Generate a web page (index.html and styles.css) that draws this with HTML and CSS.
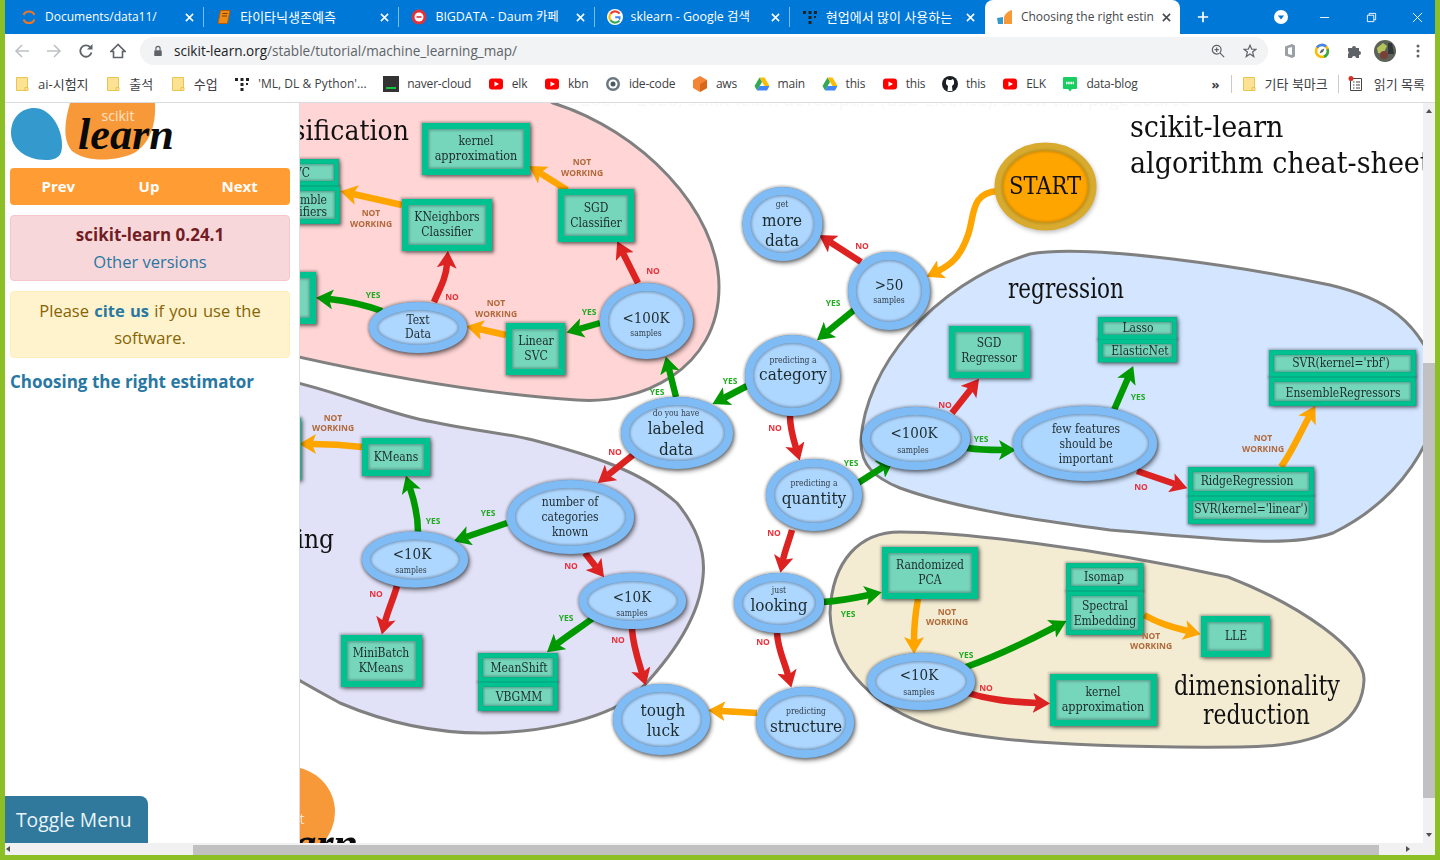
FILE: index.html
```html
<!DOCTYPE html>
<html lang="en">

<head>
    <meta charset="UTF-8">
    <meta name="viewport" content="width=device-width, initial-scale=1.0">
    <title>Choosing the right estimator</title>
    <link rel="stylesheet" href="styles.css">
</head>

<body>

    <!-- shared icons -->
    <svg class="icon-defs" aria-hidden="true">
        <symbol id="i-x" viewBox="0 0 10 10">
            <path d="M1 1L9 9M9 1L1 9" fill="none" stroke="currentColor" stroke-width="1.7" />
        </symbol>
        <symbol id="i-folder" viewBox="0 0 14 16">
            <path d="M1.5 1.5H12.5V14.5H1.5Z" fill="#fde293" stroke="#e8c450" />
            <path d="M10 11.5H13V14.5H10Z" fill="#fde293" stroke="#e8c450" />
        </symbol>
        <symbol id="i-yt" viewBox="0 0 16 16">
            <rect x="1" y="2.5" width="14" height="11" rx="3" fill="#f00" />
            <path d="M6.5 5.5L11 8L6.5 10.5Z" fill="#fff" />
        </symbol>
        <symbol id="i-dots" viewBox="0 0 16 16">
            <g fill="#222">
                <rect x="1" y="2" width="3" height="3" />
                <rect x="6.5" y="2" width="3" height="3" />
                <rect x="12" y="2" width="3" height="3" />
                <rect x="6.5" y="7" width="3" height="3" />
                <rect x="12" y="7" width="2" height="2" />
                <rect x="6.5" y="12" width="3" height="3" />
            </g>
        </symbol>
        <symbol id="i-drive" viewBox="0 0 16 16">
            <path d="M5.5 1.5H10.5L15.5 10H10.5Z" fill="#fbbc04" />
            <path d="M5.5 1.5L.5 10L3 14.5L8 6Z" fill="#34a853" />
            <path d="M3 14.5H13L15.5 10H5.5Z" fill="#4285f4" />
        </symbol>
    </svg>

    <div class="tabbar">
        <div class="tab">
            <svg class="fav" viewBox="0 0 16 16">
                <path d="M2.5 6A6 6 0 0 1 13.5 6" fill="none" stroke="#e8762b" stroke-width="2" />
                <path d="M2.5 10.5A6 6 0 0 0 13.5 10.5" fill="none" stroke="#e8762b" stroke-width="2" />
            </svg>
            <span class="tab-title">Documents/data11/</span>
            <svg class="tab-x"><use href="#i-x" /></svg>
        </div>
        <div class="tab">
            <svg class="fav" viewBox="0 0 16 16">
                <path d="M4.5 1.5H14L11.5 14.5H2Z" fill="#ef8a17" stroke="#b35c00" />
                <path d="M6.5 4.5H11.5M6 7H11" stroke="#7a3e00" />
            </svg>
            <span class="tab-title ko">타이타닉생존예측</span>
            <svg class="tab-x"><use href="#i-x" /></svg>
        </div>
        <div class="tab">
            <svg class="fav" viewBox="0 0 16 16">
                <circle cx="8" cy="8" r="7.5" fill="#e0323c" />
                <circle cx="8" cy="8" r="4.5" fill="#fff" />
                <path d="M5.5 8H10.5" stroke="#e0323c" stroke-width="1.6" />
            </svg>
            <span class="tab-title mixed">BIGDATA - Daum 카페</span>
            <svg class="tab-x"><use href="#i-x" /></svg>
        </div>
        <div class="tab">
            <svg class="fav" viewBox="0 0 16 16">
                <circle cx="8" cy="8" r="8" fill="#fff" />
                <path d="M12.6 4.6A5.6 5.6 0 0 0 3.5 4.8" fill="none" stroke="#ea4335" stroke-width="2.2" />
                <path d="M3.5 4.8A5.6 5.6 0 0 0 3.5 11.2" fill="none" stroke="#fbbc05" stroke-width="2.2" />
                <path d="M3.5 11.2A5.6 5.6 0 0 0 12.4 11.6" fill="none" stroke="#34a853" stroke-width="2.2" />
                <path d="M12.4 11.6A5.6 5.6 0 0 0 13.6 7.2H8.2V9.2H11.5" fill="#4285f4" />
            </svg>
            <span class="tab-title mixed">sklearn - Google 검색</span>
            <svg class="tab-x"><use href="#i-x" /></svg>
        </div>
        <div class="tab">
            <svg class="fav"><use href="#i-dots" /></svg>
            <span class="tab-title ko">현업에서 많이 사용하는</span>
            <svg class="tab-x"><use href="#i-x" /></svg>
        </div>
        <div class="tab tab-active">
            <svg class="fav" viewBox="0 0 16 16">
                <path d="M0 9L6 8V15H1Z" fill="#3499cd" />
                <path d="M7 8C8 5 11 2 15 1V15H7Z" fill="#f89939" />
            </svg>
            <span class="tab-title">Choosing the right estin</span>
            <svg class="tab-x"><use href="#i-x" /></svg>
        </div>
        <svg class="new-tab" viewBox="0 0 14 14">
            <path d="M7 1V13M1 7H13" stroke="#fff" stroke-width="2" />
        </svg>
        <svg class="tab-search" viewBox="0 0 14 14">
            <circle cx="7" cy="7" r="7" fill="#fff" />
            <path d="M4 5.5H10L7 9.5Z" fill="#0078d7" />
        </svg>
        <div class="win-btns">
            <svg viewBox="0 0 12 12"><path d="M1 6H11" stroke="#fff" /></svg>
            <svg viewBox="0 0 12 12">
                <path d="M1.5 3.5H8.5V10.5H1.5ZM3.5 3.5V1.5H10.5V8.5H8.5" fill="none" stroke="#fff" />
            </svg>
            <svg viewBox="0 0 12 12"><path d="M1 1L11 11M11 1L1 11" stroke="#fff" /></svg>
        </div>
    </div>

    <div class="toolbar">
        <svg class="tool tool-off" viewBox="0 0 16 16">
            <path d="M15 8H2M8 2L2 8L8 14" fill="none" stroke="currentColor" stroke-width="1.6" />
        </svg>
        <svg class="tool tool-off" viewBox="0 0 16 16">
            <path d="M1 8H14M8 2L14 8L8 14" fill="none" stroke="currentColor" stroke-width="1.6" />
        </svg>
        <svg class="tool" viewBox="0 0 16 16">
            <path d="M13.5 9.5A5.7 5.7 0 1 1 12 4" fill="none" stroke="currentColor" stroke-width="1.8" />
            <path d="M14.5 1V6.5H9Z" fill="currentColor" />
        </svg>
        <svg class="tool" viewBox="0 0 16 16">
            <path d="M8 1.5L1 8.5H3.5V14.5H12.5V8.5H15Z" fill="none" stroke="currentColor" stroke-width="1.6" />
        </svg>
        <div class="omnibox">
            <svg class="lock" viewBox="0 0 12 14">
                <path d="M3.5 6V4A2.5 2.5 0 0 1 8.5 4V6" fill="none" stroke="#5f6368" stroke-width="1.4" />
                <rect x="1.5" y="6" width="9" height="7" rx="1" fill="#5f6368" />
            </svg>
            <span class="url">scikit-learn.org<span class="url-path">/stable/tutorial/machine_learning_map/</span></span>
            <svg class="omni-icon" viewBox="0 0 16 16">
                <circle cx="6.5" cy="6.5" r="5" fill="none" stroke="#5f6368" stroke-width="1.4" />
                <path d="M10.5 10.5L15 15M4 6.5H9M6.5 4V9" stroke="#5f6368" stroke-width="1.4" />
            </svg>
            <svg class="omni-icon omni-star" viewBox="0 0 16 16">
                <path d="M8 1.5L10 6H14.8L11 9.2L12.3 14.3L8 11.5L3.7 14.3L5 9.2L1.2 6H6Z" fill="none" stroke="#5f6368" stroke-width="1.4" />
            </svg>
        </div>
        <svg class="ext ext-first" viewBox="0 0 16 16">
            <path d="M3 3.5L10 1L13 2.5V13.5L10 15L3 12.5Z" fill="#9aa0a6" />
            <path d="M6 5L10 4V12L6 11Z" fill="#fff" />
        </svg>
        <svg class="ext" viewBox="0 0 16 16">
            <circle cx="8" cy="8" r="6" fill="#fff" stroke="#fbbc04" stroke-width="2.6" />
            <path d="M3 4.5A6 6 0 0 1 12 3.5" fill="none" stroke="#4285f4" stroke-width="2.6" />
            <path d="M13.5 6A6 6 0 0 1 10 13.8" fill="none" stroke="#34a853" stroke-width="2.6" />
            <path d="M10.5 5.5L7 7L5.5 10.5L9 9Z" fill="#5f6368" />
        </svg>
        <svg class="ext" viewBox="0 0 16 16">
            <path d="M2 5H6A2 2 0 0 1 10 5H13V8A2 2 0 0 1 13 12V15H10A2 2 0 0 0 6 15H2V11A2 2 0 0 0 2 8Z" fill="#5f6368" />
        </svg>
        <svg class="avatar" viewBox="0 0 22 22">
            <circle cx="11" cy="11" r="11" fill="#5c6258" />
            <path d="M3 8L9 3L13 6L9 14L4 13Z" fill="#b5c45a" />
            <path d="M14 3H18L20 14H14Z" fill="#30363a" />
            <circle cx="10" cy="15" r="4" fill="#7a4038" />
        </svg>
        <svg class="kebab" viewBox="0 0 4 16">
            <circle cx="2" cy="3" r="1.5" fill="#5f6368" />
            <circle cx="2" cy="8" r="1.5" fill="#5f6368" />
            <circle cx="2" cy="13" r="1.5" fill="#5f6368" />
        </svg>
    </div>

    <div class="bookmarks">
        <span class="bm ko"><svg class="bm-icon"><use href="#i-folder" /></svg>ai-시험지</span>
        <span class="bm ko"><svg class="bm-icon"><use href="#i-folder" /></svg>출석</span>
        <span class="bm ko"><svg class="bm-icon"><use href="#i-folder" /></svg>수업</span>
        <span class="bm bm-wide"><svg class="bm-icon"><use href="#i-dots" /></svg>'ML, DL &amp; Python'...</span>
        <span class="bm">
            <svg class="bm-icon" viewBox="0 0 16 16">
                <rect x="0" y="0" width="16" height="16" fill="#333" />
                <rect x="3" y="11" width="10" height="2" fill="#13c540" />
            </svg>naver-cloud</span>
        <span class="bm"><svg class="bm-icon"><use href="#i-yt" /></svg>elk</span>
        <span class="bm"><svg class="bm-icon"><use href="#i-yt" /></svg>kbn</span>
        <span class="bm">
            <svg class="bm-icon" viewBox="0 0 16 16">
                <circle cx="8" cy="8" r="7" fill="#6b7780" />
                <circle cx="8" cy="8" r="4.5" fill="#fff" />
                <circle cx="8" cy="8" r="2.5" fill="#4c5860" />
            </svg>ide-code</span>
        <span class="bm">
            <svg class="bm-icon" viewBox="0 0 16 16">
                <path d="M8 0L15 4V12L8 16L1 12V4Z" fill="#f58536" />
                <path d="M8 8L15 4V12L8 16Z" fill="#d9671b" />
            </svg>aws</span>
        <span class="bm"><svg class="bm-icon"><use href="#i-drive" /></svg>main</span>
        <span class="bm"><svg class="bm-icon"><use href="#i-drive" /></svg>this</span>
        <span class="bm"><svg class="bm-icon"><use href="#i-yt" /></svg>this</span>
        <span class="bm">
            <svg class="bm-icon" viewBox="0 0 16 16">
                <circle cx="8" cy="8" r="8" fill="#1b1f23" />
                <path d="M4 5L5 3L7 4H9L11 3L12 5V8L10 10L10.5 15H5.5L6 10L4 8Z" fill="#fff" />
            </svg>this</span>
        <span class="bm"><svg class="bm-icon"><use href="#i-yt" /></svg>ELK</span>
        <span class="bm">
            <svg class="bm-icon" viewBox="0 0 16 16">
                <path d="M2 1H14A1 1 0 0 1 15 2V12A1 1 0 0 1 14 13H10L8 15.5L6 13H2A1 1 0 0 1 1 12V2A1 1 0 0 1 2 1Z" fill="#19ce60" />
                <path d="M4 7H12" stroke="#fff" stroke-width="2.5" stroke-dasharray="1.5 .7" />
            </svg>data-blog</span>
        <span class="bm-more">»</span>
        <span class="bm-sep"></span>
        <span class="bm ko bm-right"><svg class="bm-icon"><use href="#i-folder" /></svg>기타 북마크</span>
        <span class="bm-sep"></span>
        <span class="bm ko bm-last">
            <svg class="bm-icon" viewBox="0 0 16 16">
                <path d="M2.5 2.5H13.5V14.5H2.5Z" fill="none" stroke="#444" />
                <path d="M5 6H6.5M8 6H12M5 9H6.5M8 9H12M5 12H6.5M8 12H12" stroke="#444" />
                <circle cx="3" cy="2.5" r="2.5" fill="#d93025" />
            </svg>읽기 목록</span>
    </div>

    <div class="viewport">
        <div class="page">
            <div class="sidebar">
                <svg class="logo" viewBox="0 0 170 57">
                    <path d="M1 30C1 14 12 5 24 5C40 5 52 24 52 42C52 50 50 57 36 57C14 57 1 44 1 30Z" class="logo-blue" />
                    <path d="M60 0H145C146 20 141 40 124 50C108 58 76 60 62 48C53 38 54 20 60 0Z" class="logo-orange" />
                    <text x="108" y="18" class="logo-scikit">scikit</text>
                    <text x="68" y="46" class="logo-learn" textLength="96" lengthAdjust="spacingAndGlyphs">learn</text>
                </svg>
                <div class="nav-btns">
                    <a>Prev</a>
                    <a>Up</a>
                    <a>Next</a>
                </div>
                <div class="box box-version">
                    <strong>scikit-learn 0.24.1</strong>
                    <a>Other versions</a>
                </div>
                <div class="box box-cite">
                    Please <b>cite us</b> if you use the software.
                </div>
                <div class="toc-link">Choosing the right estimator</div>
                <div class="toggle-menu">Toggle Menu</div>
            </div>

            <div class="content">
                <svg class="map" viewBox="300 103 1123 740">
                    <defs>
                        <marker id="head-red" markerUnits="userSpaceOnUse" markerWidth="18" markerHeight="20" refX="4" refY="10" orient="auto">
                            <path d="M0 0L17 10L0 20L4 10Z" class="fill-red" />
                        </marker>
                        <marker id="head-green" markerUnits="userSpaceOnUse" markerWidth="18" markerHeight="20" refX="4" refY="10" orient="auto">
                            <path d="M0 0L17 10L0 20L4 10Z" class="fill-green" />
                        </marker>
                        <marker id="head-orange" markerUnits="userSpaceOnUse" markerWidth="18" markerHeight="20" refX="4" refY="10" orient="auto">
                            <path d="M0 0L17 10L0 20L4 10Z" class="fill-orange" />
                        </marker>

                        <g id="box-shapes">
                            <rect x="425" y="126" width="102" height="46" />
                            <rect x="405" y="202" width="84" height="46" />
                            <rect x="561" y="192" width="70" height="47" />
                            <rect x="509" y="326" width="53" height="46" />
                            <rect x="290" y="275" width="23" height="46" />
                            <rect x="365" y="441" width="62" height="32" />
                            <rect x="285" y="421" width="13" height="56" />
                            <rect x="344" y="638" width="75" height="46" />
                            <rect x="952" y="329" width="75" height="46" />
                            <rect x="885" y="550" width="90" height="46" />
                            <rect x="1204" y="619" width="63" height="35" />
                            <rect x="1053" y="677" width="101" height="46" />
                        </g>
                        <g id="stack-shapes">
                            <rect x="290" y="161.5" width="46.5" height="22" />
                            <rect x="290" y="188.5" width="47.5" height="33" />
                            <rect x="480.5" y="655.5" width="75" height="24" />
                            <rect x="480.5" y="684.5" width="75" height="24" />
                            <rect x="1100.5" y="319.5" width="74" height="17.5" />
                            <rect x="1100.5" y="341.5" width="74" height="18.5" />
                            <rect x="1271.5" y="352.5" width="142" height="22" />
                            <rect x="1271.5" y="379.5" width="142" height="24" />
                            <rect x="1190.5" y="469.5" width="121" height="24" />
                            <rect x="1190.5" y="498.5" width="121" height="23" />
                            <rect x="1068.5" y="565.5" width="72.5" height="23" />
                            <rect x="1068.5" y="593.5" width="72.5" height="39" />
                        </g>
                        <g id="oval-shapes">
                            <ellipse cx="782.5" cy="224" rx="36" ry="33" />
                            <ellipse cx="889" cy="291" rx="37" ry="35" />
                            <ellipse cx="792.5" cy="375.5" rx="43.5" ry="36.5" />
                            <ellipse cx="916" cy="438.5" rx="50" ry="27.5" />
                            <ellipse cx="814" cy="495" rx="44" ry="32" />
                            <ellipse cx="1085" cy="443.5" rx="68" ry="33.5" />
                            <ellipse cx="677" cy="433" rx="52" ry="32" />
                            <ellipse cx="646.5" cy="321" rx="42.5" ry="34" />
                            <ellipse cx="418" cy="327.5" rx="45" ry="21.5" />
                            <ellipse cx="570.5" cy="517" rx="59.5" ry="33" />
                            <ellipse cx="415" cy="559.5" rx="49" ry="24" />
                            <ellipse cx="632.5" cy="601" rx="49.5" ry="24" />
                            <ellipse cx="661.5" cy="719.5" rx="44.5" ry="31.5" />
                            <ellipse cx="779" cy="603" rx="41" ry="26" />
                            <ellipse cx="805" cy="722.5" rx="45" ry="31.5" />
                            <ellipse cx="921" cy="681.5" rx="50" ry="24.5" />
                        </g>
                    </defs>

                    <text x="1190" y="106" class="faint">© 2007 - 2020, scikit-learn developers (BSD License). Show this page source</text>

                    <!-- regions -->
                    <path class="region region-class" d="M290 355C400 380 500 395 577 400C640 405 719 370 719 287C719 210 640 130 553 103L540 95H290Z" />
                    <path class="region region-clust" d="M290 381C350 395 390 415 433 422C480 432 500 432 533 440C590 455 640 470 677 503C695 525 706 550 703 577C700 610 680 650 633 697C600 720 540 733 483 733C430 733 380 720 340 703C325 695 312 688 290 675Z" />
                    <path class="region region-reg" d="M861 440C865 370 930 285 1030 254C1090 243 1250 268 1330 285C1385 298 1420 320 1440 380C1440 440 1400 500 1333 533C1290 548 1230 540 1110 530C1050 522 960 510 900 488C875 478 860 465 861 440Z" />
                    <path class="region region-dim" d="M830 613C832 560 860 532 900 532C960 532 1090 547 1228 577C1300 605 1365 650 1364 680C1362 730 1310 747 1240 747C1120 748 1000 745 934 727C880 710 832 670 830 613Z" />

                    <!-- region titles -->
                    <text x="409" y="140" class="heading h-end">classification</text>
                    <text x="334" y="548" class="heading h-end h-narrow">clustering</text>
                    <text x="1008" y="298" class="heading h-tall" textLength="116" lengthAdjust="spacingAndGlyphs">regression</text>
                    <text x="1174" y="695" class="heading h-tall" textLength="166" lengthAdjust="spacingAndGlyphs">dimensionality</text>
                    <text x="1203" y="724" class="heading h-tall" textLength="107" lengthAdjust="spacingAndGlyphs">reduction</text>
                    <text x="1130" y="137" class="heading h-title">scikit-learn</text>
                    <text x="1130" y="173" class="heading h-title">algorithm cheat-sheet</text>

                    <!-- stray logo from the footer -->
                    <circle cx="290" cy="812" r="45" class="logo-orange" />
                    <text x="302" y="824" class="logo-scikit">t</text>
                    <text x="358" y="858" class="logo-learn logo-learn-end">learn</text>

                    <!-- arrows -->
                    <g class="arrows">
                        <path class="a-orange" d="M998 191C970 193 975 215 968 235C960 258 950 265 938 271" />
                        <path class="a-orange" d="M567 190L540 173" />
                        <path class="a-orange" d="M402 205L353 194" />
                        <path class="a-orange" d="M506 335L479 329" />
                        <path class="a-orange" d="M362 447C345 445 330 444 312 444" />
                        <path class="a-orange" d="M757 713L721 711" />
                        <path class="a-orange" d="M918 599C915 615 914 628 914 641" />
                        <path class="a-orange" d="M1144 615C1160 624 1172 627 1188 631" />
                        <path class="a-orange" d="M1281 467C1292 452 1300 433 1309 417" />

                        <path class="a-red" d="M861 262L830 242" />
                        <path class="a-red" d="M790 416C790 428 793 438 796 448" />
                        <path class="a-red" d="M638 283L623 253" />
                        <path class="a-red" d="M434 302C440 288 446 278 447 264" />
                        <path class="a-red" d="M633 455L608 475" />
                        <path class="a-red" d="M585 553L596 567" />
                        <path class="a-red" d="M397 586C393 600 388 610 385 622" />
                        <path class="a-red" d="M632 629C633 645 638 660 642 673" />
                        <path class="a-red" d="M792 530C789 541 785 550 783 560" />
                        <path class="a-red" d="M777 633C778 650 784 660 788 675" />
                        <path class="a-red" d="M1137 471L1175 484" />
                        <path class="a-red" d="M952 413L971 389" />
                        <path class="a-red" d="M968 693C990 700 1010 702 1037 703" />

                        <path class="a-green" d="M854 310L827 332" />
                        <path class="a-green" d="M747 386L724 398" />
                        <path class="a-green" d="M676 397L669 369" />
                        <path class="a-green" d="M600 323L579 329" />
                        <path class="a-green" d="M382 311C365 305 348 301 329 299" />
                        <path class="a-green" d="M507 523L466 537" />
                        <path class="a-green" d="M418 532C418 515 414 500 410 488" />
                        <path class="a-green" d="M593 618C580 628 568 635 557 644" />
                        <path class="a-green" d="M858 483L883 467" />
                        <path class="a-green" d="M967 448C980 450 990 450 1003 450" />
                        <path class="a-green" d="M1114 410L1128 378" />
                        <path class="a-green" d="M823 602C840 601 855 598 869 595" />
                        <path class="a-green" d="M966 667C1000 655 1030 640 1055 627" />
                    </g>

                    <!-- algorithm boxes: base, inner shade, border on top -->
                    <use href="#box-shapes" class="box-base" />
                    <use href="#box-shapes" class="box-shade" />
                    <use href="#box-shapes" class="box-edge" />
                    <use href="#stack-shapes" class="stack-base" />
                    <use href="#stack-shapes" class="stack-shade" />
                    <use href="#stack-shapes" class="stack-edge" />

                    <!-- decision nodes -->
                    <use href="#oval-shapes" class="oval-base" />
                    <use href="#oval-shapes" class="oval-shade" />
                    <use href="#oval-shapes" class="oval-edge" />
                    <ellipse class="oval-start" cx="1045.5" cy="186.5" rx="47" ry="40" />
                    <ellipse class="start-shade" cx="1045.5" cy="186.5" rx="43" ry="36" />

                    <!-- node text -->
                    <g class="labels" transform="translate(0 0.3)">
                        <text x="476" y="145">kernel</text>
                        <text x="476" y="160" class="l-wide">approximation</text>
                        <text x="310" y="177" class="l-end">SVC</text>
                        <text x="327" y="204" class="l-end">Ensemble</text>
                        <text x="327" y="216" class="l-end">Classifiers</text>
                        <text x="447" y="221">KNeighbors</text>
                        <text x="447" y="236">Classifier</text>
                        <text x="596" y="212">SGD</text>
                        <text x="596" y="227">Classifier</text>
                        <text x="536" y="345">Linear</text>
                        <text x="536" y="360">SVC</text>
                        <text x="418" y="324">Text</text>
                        <text x="418" y="338">Data</text>
                        <text x="396" y="461">KMeans</text>
                        <text x="381" y="657">MiniBatch</text>
                        <text x="381" y="672">KMeans</text>
                        <text x="519" y="672">MeanShift</text>
                        <text x="519" y="701">VBGMM</text>
                        <text x="570" y="506">number of</text>
                        <text x="570" y="521">categories</text>
                        <text x="570" y="536">known</text>
                        <text x="1086" y="433">few features</text>
                        <text x="1086" y="448">should be</text>
                        <text x="1086" y="463">important</text>
                        <text x="989" y="347">SGD</text>
                        <text x="989" y="362">Regressor</text>
                        <text x="1138" y="332">Lasso</text>
                        <text x="1140" y="355">ElasticNet</text>
                        <text x="1341" y="367">SVR(kernel='rbf')</text>
                        <text x="1343" y="397">EnsembleRegressors</text>
                        <text x="1247" y="485">RidgeRegression</text>
                        <text x="1251" y="513">SVR(kernel='linear')</text>
                        <text x="930" y="569">Randomized</text>
                        <text x="930" y="584">PCA</text>
                        <text x="1104" y="581">Isomap</text>
                        <text x="1105" y="610">Spectral</text>
                        <text x="1105" y="625">Embedding</text>
                        <text x="1236" y="640">LLE</text>
                        <text x="1103" y="696">kernel</text>
                        <text x="1103" y="711" class="l-wide">approximation</text>

                        <text x="646" y="322.5" class="l-num">&lt;100K</text>
                        <text x="646" y="336" class="l-small">samples</text>
                        <text x="676" y="415.5" class="l-small">do you have</text>
                        <text x="676" y="434" class="l-big">labeled</text>
                        <text x="676" y="454.5" class="l-big">data</text>
                        <text x="412" y="559" class="l-num">&lt;10K</text>
                        <text x="411" y="573" class="l-small">samples</text>
                        <text x="632" y="602" class="l-num">&lt;10K</text>
                        <text x="632" y="616" class="l-small">samples</text>
                        <text x="663" y="716" class="l-big">tough</text>
                        <text x="663" y="736" class="l-big">luck</text>
                        <text x="779" y="593" class="l-small">just</text>
                        <text x="779" y="611" class="l-big">looking</text>
                        <text x="806" y="714" class="l-small">predicting</text>
                        <text x="806" y="732" class="l-big">structure</text>
                        <text x="782" y="206.5" class="l-small">get</text>
                        <text x="782" y="226" class="l-big">more</text>
                        <text x="782" y="246" class="l-big">data</text>
                        <text x="889" y="290" class="l-num">&gt;50</text>
                        <text x="889" y="303" class="l-small">samples</text>
                        <text x="793" y="362.5" class="l-small">predicting a</text>
                        <text x="793" y="380" class="l-big">category</text>
                        <text x="814" y="485.5" class="l-small">predicting a</text>
                        <text x="814" y="504" class="l-big">quantity</text>
                        <text x="914" y="438" class="l-num">&lt;100K</text>
                        <text x="913" y="453" class="l-small">samples</text>
                        <text x="919" y="680" class="l-num">&lt;10K</text>
                        <text x="919" y="695" class="l-small">samples</text>
                        <text x="1045" y="193.5" class="l-start">START</text>
                    </g>

                    <!-- edge tags -->
                    <g class="tags tag-no">
                        <text x="862" y="249">NO</text>
                        <text x="653" y="274">NO</text>
                        <text x="452" y="300">NO</text>
                        <text x="775" y="431">NO</text>
                        <text x="945" y="408">NO</text>
                        <text x="1141" y="490">NO</text>
                        <text x="615" y="455">NO</text>
                        <text x="571" y="569">NO</text>
                        <text x="376" y="597">NO</text>
                        <text x="618" y="643">NO</text>
                        <text x="774" y="536">NO</text>
                        <text x="763" y="645">NO</text>
                        <text x="986" y="691">NO</text>
                    </g>
                    <g class="tags tag-yes">
                        <text x="833" y="306">YES</text>
                        <text x="730" y="384">YES</text>
                        <text x="657" y="395">YES</text>
                        <text x="589" y="315">YES</text>
                        <text x="373" y="298">YES</text>
                        <text x="488" y="516">YES</text>
                        <text x="433" y="524">YES</text>
                        <text x="566" y="621">YES</text>
                        <text x="851" y="466">YES</text>
                        <text x="981" y="442">YES</text>
                        <text x="1138" y="400">YES</text>
                        <text x="848" y="617">YES</text>
                        <text x="966" y="658">YES</text>
                    </g>
                    <g class="tags tag-not">
                        <text x="582" y="165">NOT</text>
                        <text x="582" y="176">WORKING</text>
                        <text x="371" y="216">NOT</text>
                        <text x="371" y="227">WORKING</text>
                        <text x="496" y="306">NOT</text>
                        <text x="496" y="317">WORKING</text>
                        <text x="333" y="421">NOT</text>
                        <text x="333" y="431">WORKING</text>
                        <text x="1263" y="441">NOT</text>
                        <text x="1263" y="452">WORKING</text>
                        <text x="947" y="615">NOT</text>
                        <text x="947" y="625">WORKING</text>
                        <text x="1151" y="639">NOT</text>
                        <text x="1151" y="649">WORKING</text>
                    </g>
                </svg>
            </div>
        </div>

        <div class="vscroll">
            <span class="tri tri-up"></span>
            <div class="vthumb"></div>
            <span class="tri tri-down"></span>
        </div>
    </div>

    <div class="hscroll">
        <span class="tri tri-left"></span>
        <div class="hthumb"></div>
        <span class="tri tri-right"></span>
    </div>

</body>

</html>
```

FILE: styles.css
```css
html,
body {
    height: 100%;
}

body {
    font-family: "Open Sans", "Noto Sans CJK KR", sans-serif;
    background-color: #8cbf26;
    margin: 0;
    padding: 0 5px 5px;
    box-sizing: border-box;
    display: flex;
    flex-direction: column;
    overflow: hidden;
}

.icon-defs {
    position: absolute;
    width: 0;
    height: 0;
}

/* tab strip */
.tabbar {
    height: 34px;
    flex: none;
    background-color: #0078d7;
    display: flex;
    align-items: center;
    padding-left: 4px;
}

.tab {
    width: 195.2px;
    height: 34px;
    flex: none;
    box-sizing: border-box;
    padding: 0 10px 0 12px;
    display: flex;
    align-items: center;
    color: #fff;
    font-size: 12px;
    position: relative;
}

/* separator between inactive tabs */
.tab::after {
    content: "";
    position: absolute;
    right: 0;
    top: 7px;
    bottom: 7px;
    width: 1px;
    background-color: rgba(255, 255, 255, 0.5);
}

.tab:nth-child(5)::after,
.tab:nth-child(6)::after {
    background-color: transparent;
}

.tab-active {
    background-color: #fff;
    color: #45494d;
    border-radius: 8px 8px 0 0;
}

.fav {
    width: 16px;
    height: 16px;
    flex: none;
    margin-right: 8px;
}

.tab-title {
    flex: 1;
    white-space: nowrap;
    padding-bottom: 2px;
}

.tab-title.ko {
    font-size: 13px;
}

.tab-title.mixed {
    font-size: 12.4px;
}

.tab-x {
    width: 9px;
    height: 9px;
    flex: none;
    margin-left: 8px;
}

.new-tab {
    width: 12px;
    height: 12px;
    margin-left: 17px;
    flex: none;
}

.tab-search {
    width: 14px;
    height: 14px;
    margin-left: 65px;
    flex: none;
}

.win-btns {
    display: flex;
    gap: 35.5px;
    margin-left: 31px;
}

.win-btns svg {
    width: 11px;
    height: 11px;
    display: block;
}

/* toolbar */
.toolbar {
    height: 34px;
    flex: none;
    background-color: #fff;
    display: flex;
    align-items: center;
    padding-left: 9px;
}

.tool {
    width: 16px;
    height: 16px;
    flex: none;
    margin-right: 16px;
    color: #5f6368;
}

.tool-off {
    color: #bdc1c6;
}

.omnibox {
    width: 1128px;
    height: 28px;
    flex: none;
    margin-left: -2px;
    background-color: #f1f3f4;
    border-radius: 14px;
    display: flex;
    align-items: center;
    padding: 0 11px 0 13px;
    box-sizing: border-box;
}

.lock {
    width: 10px;
    height: 12px;
    flex: none;
    margin-right: 11px;
}

.url {
    flex: 1;
    font-size: 13.55px;
    color: #202124;
    white-space: nowrap;
}

.url-path {
    color: #5f6368;
}

.omni-icon {
    width: 14px;
    height: 14px;
    flex: none;
}

.omni-star {
    margin-left: 18px;
}

.ext {
    width: 16px;
    height: 16px;
    flex: none;
    margin-left: 16px;
}

.ext-first {
    margin-left: 14px;
}

.avatar {
    width: 22px;
    height: 22px;
    flex: none;
    margin-left: 12px;
}

.kebab {
    width: 4px;
    height: 16px;
    flex: none;
    margin-left: 20px;
}

/* bookmark bar */
.bookmarks {
    height: 35px;
    flex: none;
    box-sizing: border-box;
    background-color: #fff;
    border-bottom: 1px solid #dadce0;
    display: flex;
    align-items: center;
    padding: 0 10px 3px 9px;
    font-size: 12px;
    color: #3c4043;
    white-space: nowrap;
}

.bm {
    display: flex;
    align-items: center;
    margin-right: 16.6px;
    letter-spacing: -0.2px;
    flex: none;
}

.bm.ko {
    font-size: 13px;
    letter-spacing: 0;
}

.bm-wide {
    letter-spacing: 0.05px;
}

.bm-right {
    margin-right: 10px;
}

.bm-last {
    margin-right: 0;
}

.bm-last .bm-icon {
    margin-right: 10px;
}

.bm-icon {
    width: 16px;
    height: 16px;
    margin-right: 8px;
    flex: none;
}

.bm-more {
    margin-left: auto;
    margin-right: 11px;
    font-weight: bold;
    font-size: 13px;
    flex: none;
}

.bm-sep {
    width: 1px;
    height: 18px;
    background-color: #c8cacc;
    margin-right: 9px;
    flex: none;
}

/* page area */
.viewport {
    flex: 1;
    display: flex;
    min-height: 0;
    background-color: #fff;
}

.page {
    flex: 1;
    display: flex;
    min-width: 0;
}

.sidebar {
    width: 295px;
    flex: none;
    box-sizing: border-box;
    border-right: 1px solid #ddd;
    padding: 0 9px 0 5px;
    display: flex;
    flex-direction: column;
    font-family: "Open Sans", sans-serif;
    font-size: 17px;
    line-height: 27px;
    overflow: hidden;
}

.logo {
    width: 170px;
    height: 57px;
    margin-bottom: 8px;
    flex: none;
    overflow: hidden;
}

.logo-blue {
    fill: #3499cd;
}

.logo-orange {
    fill: #f89939;
}

.logo-scikit {
    fill: #fde3c8;
    font-family: "Open Sans", sans-serif;
    font-size: 14px;
    text-anchor: middle;
}

.logo-learn {
    fill: #0a0a0a;
    font-family: "Liberation Serif", serif;
    font-style: italic;
    font-weight: bold;
    font-size: 44px;
}

.logo-learn-end {
    text-anchor: end;
}

.nav-btns {
    height: 37px;
    flex: none;
    display: flex;
    align-items: center;
    padding: 0 5px 0 3px;
    background-color: #ff9c34;
    border-radius: 4px;
    color: #fff;
    font-weight: bold;
    font-size: 15px;
    margin-bottom: 10px;
}

.nav-btns a {
    flex: 1;
    text-align: center;
}

.box {
    box-sizing: border-box;
    border: 1px solid;
    border-radius: 4px;
    text-align: center;
    flex: none;
    margin-bottom: 10px;
}

.box-version {
    height: 66px;
    padding-top: 5px;
    background-color: #f8d7da;
    border-color: #f5c6cb;
    color: #721c24;
    display: flex;
    flex-direction: column;
}

.box-version a {
    color: #2878a2;
    font-size: 16.5px;
}

.box-cite {
    height: 67px;
    padding: 5px 10px;
    background-color: #fff3cd;
    border-color: #ffeeba;
    color: #856404;
    font-size: 16.5px;
    word-spacing: 1px;
}

.box-cite b {
    color: #2878a2;
}

.toc-link {
    color: #2878a2;
    font-weight: bold;
    font-size: 17px;
    white-space: nowrap;
}

.toggle-menu {
    margin-top: auto;
    margin-left: -5px;
    width: 143px;
    height: 47px;
    flex: none;
    box-sizing: border-box;
    padding-left: 11px;
    background-color: #30799c;
    border-radius: 0 8px 0 0;
    color: #eaf4f8;
    font-size: 19.3px;
    line-height: 48px;
}

.content {
    flex: 1;
    min-width: 0;
}

/* cheat-sheet */
.map {
    display: block;
    width: 100%;
    height: 100%;
    font-family: "DejaVu Serif Condensed", "DejaVu Serif", serif;
    filter: blur(0.3px);
}

.faint {
    fill: #f8f8f8;
    font-family: "Open Sans", sans-serif;
    font-size: 18px;
    text-anchor: end;
}

.region {
    stroke: #808080;
    stroke-width: 3;
}

.region-class {
    fill: #ffd5d5;
}

.region-clust {
    fill: #e1e1f7;
}

.region-reg {
    fill: #d3e5ff;
}

.region-dim {
    fill: #f3ecd3;
}

.heading {
    fill: #111;
    font-size: 28px;
}

.h-end {
    text-anchor: end;
}

.h-narrow {
    font-size: 26px;
}

.h-tall {
    font-size: 27px;
}

.h-title {
    font-size: 30px;
}

.fill-red {
    fill: #dd2222;
}

.fill-green {
    fill: #009900;
}

.fill-orange {
    fill: #ffa500;
}

.arrows path {
    fill: none;
    stroke-width: 6.5;
}

.a-red {
    stroke: #dd2222;
    marker-end: url(#head-red);
}

.a-green {
    stroke: #009900;
    marker-end: url(#head-green);
}

.a-orange {
    stroke: #ffa500;
    marker-end: url(#head-orange);
}

/* a dark ring under the border gives the bevel inside each shape */
.box-base,
.stack-base {
    fill: #76d6bc;
    stroke: #00c291;
    filter: drop-shadow(2px 2px 2px rgba(0, 0, 0, 0.4));
}

.box-base {
    stroke-width: 6;
}

.stack-base {
    stroke-width: 4.5;
}

.box-shade,
.stack-shade,
.oval-shade {
    fill: none;
    stroke: #000;
    stroke-opacity: 0.25;
    filter: blur(0.8px);
}

.box-shade {
    stroke-width: 9;
}

.stack-shade {
    stroke-width: 7.5;
}

.box-edge,
.stack-edge {
    fill: none;
    stroke: #00c291;
}

.box-edge {
    stroke-width: 6;
}

.stack-edge {
    stroke-width: 4.5;
}

.oval-base {
    fill: #aed7ff;
    stroke: #7fbcf5;
    stroke-width: 8;
    filter: drop-shadow(2px 3px 2px rgba(0, 0, 0, 0.4));
}

.oval-shade {
    stroke-width: 11;
}

.oval-edge {
    fill: none;
    stroke: #7fbcf5;
    stroke-width: 8;
}

.oval-start {
    fill: #ffa500;
    stroke: #d8ab2e;
    stroke-width: 8;
    filter: drop-shadow(1px 2px 2px rgba(0, 0, 0, 0.25));
}

.start-shade {
    fill: none;
    stroke: #8a6a10;
    stroke-width: 2;
    stroke-opacity: 0.5;
    filter: blur(0.8px);
}

.labels text {
    fill: #1d2a2a;
    font-size: 12px;
    text-anchor: middle;
}

.labels .l-end {
    text-anchor: end;
}

.labels .l-wide {
    font-size: 12.5px;
}

.labels .l-big {
    font-size: 17px;
}

.labels .l-num {
    font-size: 15px;
}

.labels .l-small {
    font-size: 8.5px;
    fill: #333f48;
}

.labels .l-start {
    font-size: 23.5px;
    fill: #111;
}

.tags text {
    font-family: "Open Sans", sans-serif;
    font-weight: bold;
    font-size: 8.5px;
    text-anchor: middle;
}

.tag-no text {
    fill: #e8303a;
}

.tag-yes text {
    fill: #22aa22;
}

.tag-not text {
    fill: #b0693a;
}

/* scrollbars */
.vscroll {
    width: 12px;
    flex: none;
    background-color: #f1f1f1;
    display: flex;
    flex-direction: column;
    align-items: center;
}

.vthumb {
    width: 12px;
    height: 435px;
    margin-top: 250px;
    background-color: #c1c1c1;
}

.hscroll {
    height: 12px;
    flex: none;
    background-color: #f1f1f1;
    display: flex;
    align-items: center;
}

.hthumb {
    width: 1186px;
    height: 10px;
    margin-top: 2px;
    margin-left: 183px;
    background-color: #c1c1c1;
}

.tri {
    width: 0;
    height: 0;
    flex: none;
    border: 3px solid transparent;
}

.tri-up {
    border-top: 0;
    border-bottom: 4px solid #505050;
    margin-top: 6px;
}

.tri-down {
    border-bottom: 0;
    border-top: 4px solid #505050;
    margin-top: auto;
    margin-bottom: 6px;
}

.tri-left {
    border-left: 0;
    border-right: 4px solid #505050;
    margin-left: 1px;
}

.tri-right {
    border-right: 0;
    border-left: 4px solid #505050;
    margin-left: 27px;
}
```
